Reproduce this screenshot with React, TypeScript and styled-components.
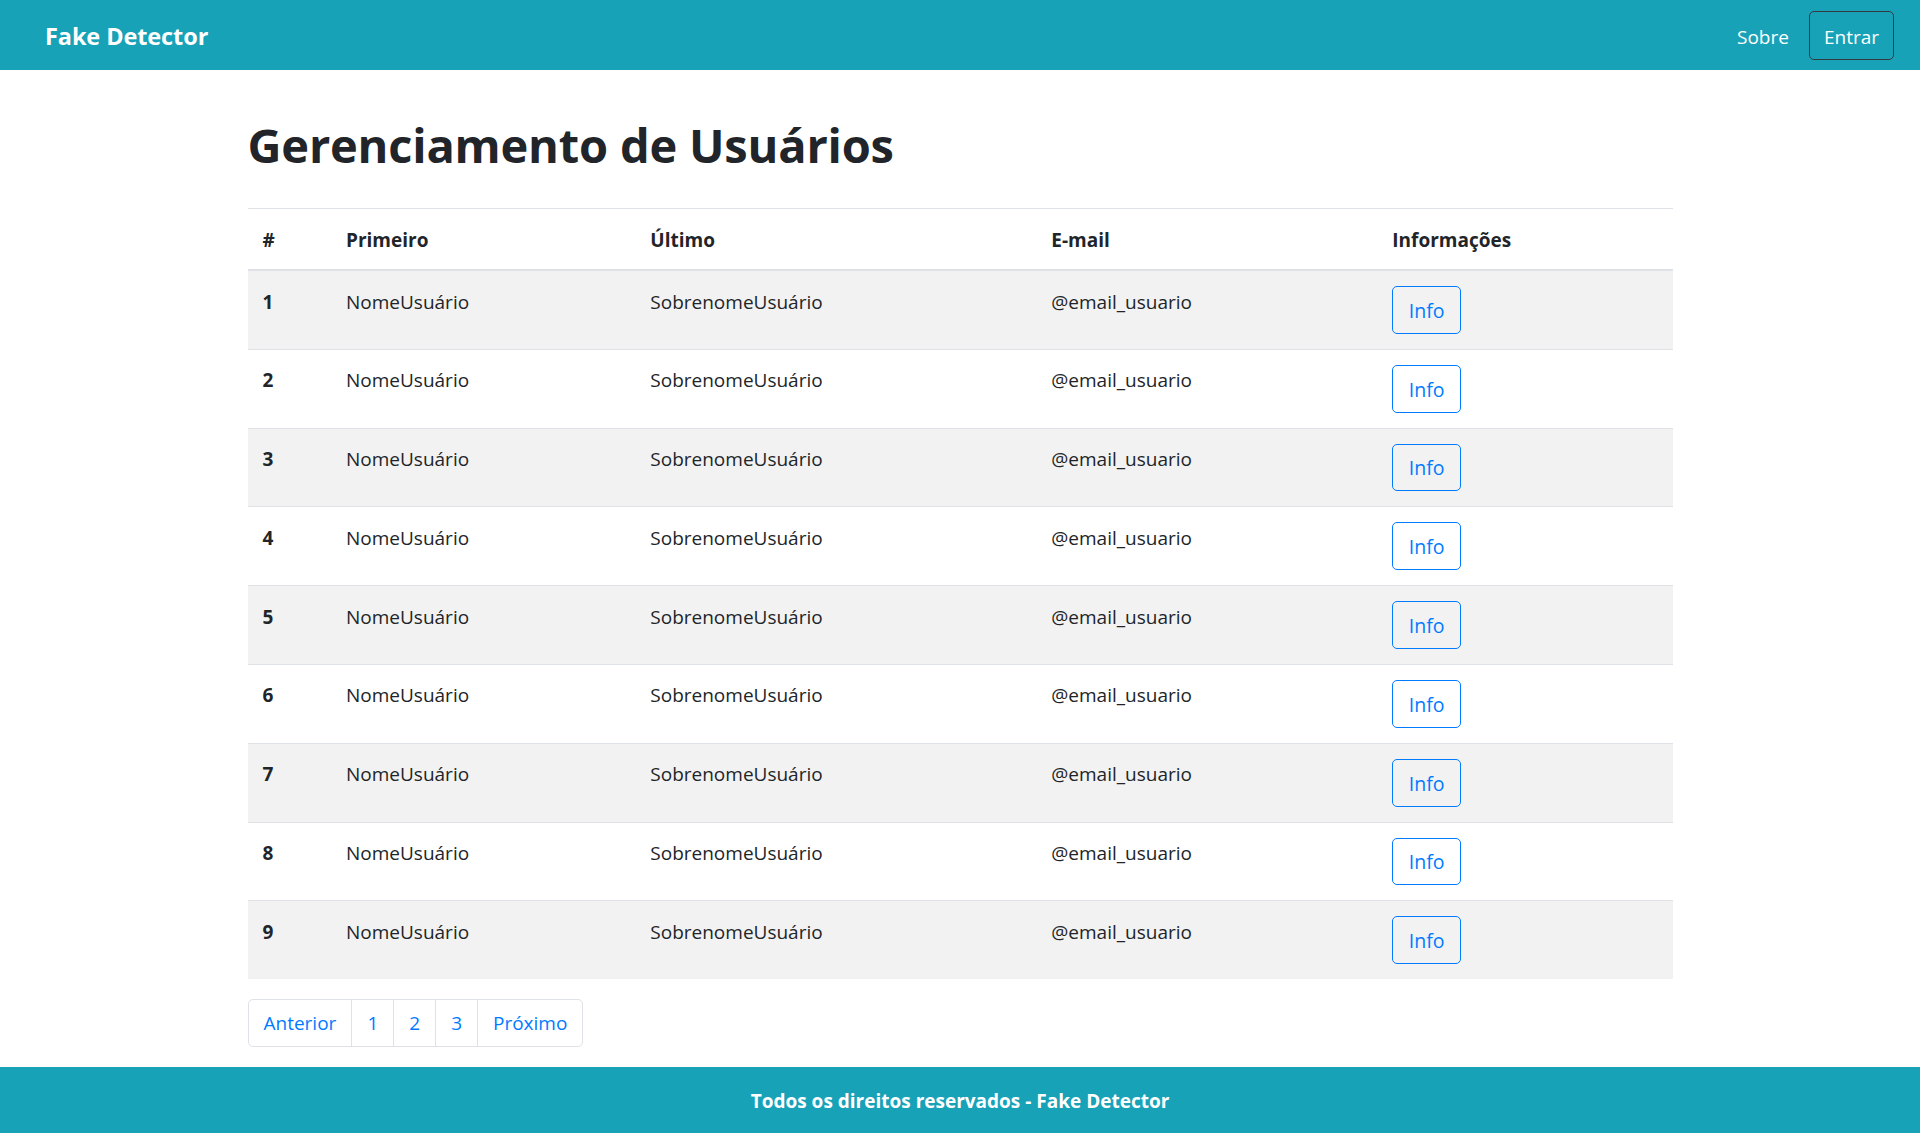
import React from "react";
import styled, { createGlobalStyle } from "styled-components";

const GlobalStyle = createGlobalStyle`
  html, body {
    margin: 0;
    padding: 0;
  }
  body {
    font-family: "Open Sans", "Noto Sans", "DejaVu Sans", sans-serif;
    font-size: 19px;
    line-height: 30px;
    color: #212529;
    background: #ffffff;
  }
  * { box-sizing: border-box; }
`;

const Page = styled.div`
  min-height: 100vh;
  display: flex;
  flex-direction: column;
`;

const Navbar = styled.nav`
  height: 70px;
  background: #17a2b8;
  display: flex;
  align-items: center;
  justify-content: space-between;
  padding: 1px 26px 0 45px;
`;

const Brand = styled.a`
  color: #ffffff;
  font-weight: 700;
  font-size: 23.5px;
  line-height: 37px;
  text-decoration: none;
  letter-spacing: -0.1px;
  padding-top: 2px;
`;

const NavRight = styled.div`
  display: flex;
  align-items: center;
`;

const NavLink = styled.a`
  color: #ffffff;
  font-size: 19px;
  line-height: 30px;
  padding: 11px 10px 9px;
  text-decoration: none;
`;

const OutlineButton = styled.button`
  margin-left: 10px;
  height: 49px;
  padding: 2px 14px 0;
  font-family: inherit;
  font-size: 19px;
  color: #ffffff;
  background: transparent;
  border: 1px solid #343a40;
  border-radius: 5px;
`;

const Container = styled.main`
  width: 1425px;
  margin: 0 auto;
`;

const Title = styled.h1`
  margin: 47px 0 35px;
  font-size: 47px;
  line-height: 56px;
  font-weight: 700;
  color: #212529;
  letter-spacing: -0.2px;
`;

const Table = styled.table`
  width: 100%;
  border-collapse: collapse;
  table-layout: fixed;
  margin-bottom: 20px;
`;

const Th = styled.th`
  text-align: left;
  font-weight: 700;
  padding: 16px 15px 14px;
  line-height: 30px;
  border-top: 1px solid #dee2e6;
  border-bottom: 2px solid #dee2e6;
  vertical-align: bottom;
`;

const Tr = styled.tr<{ $striped: boolean }>`
  background: ${(p) => (p.$striped ? "#f2f2f2" : "transparent")};
`;

const Td = styled.td<{ $bold?: boolean }>`
  padding: 15px 15px;
  line-height: 30px;
  vertical-align: top;
  border-top: 1px solid #dee2e6;
  font-weight: ${(p) => (p.$bold ? 700 : 400)};
`;

const CellText = styled.span`
  display: block;
  padding-top: 0.5px;
`;

const InfoButton = styled.button`
  height: 47.8px;
  padding: 1px 15.5px 0;
  font-family: inherit;
  font-size: 19.5px;
  color: #007bff;
  background: transparent;
  border: 1px solid #007bff;
  border-radius: 5px;
  cursor: pointer;
`;

const Pagination = styled.ul`
  display: flex;
  list-style: none;
  padding: 0;
  margin: 0 0 20px;
`;

const PageLink = styled.a<{ $first?: boolean; $last?: boolean }>`
  display: block;
  padding: 11px 15px 9px;
  line-height: 25.5px;
  font-size: 19px;
  color: #007bff;
  background: #ffffff;
  border: 1px solid #dee2e6;
  margin-left: ${(p) => (p.$first ? "0" : "-1px")};
  border-radius: ${(p) =>
    p.$first ? "5px 0 0 5px" : p.$last ? "0 5px 5px 0" : "0"};
  text-decoration: none;
`;

const Footer = styled.footer`
  margin-top: auto;
  height: 67.5px;
  padding-top: 2px;
  background: #17a2b8;
  color: #ffffff;
  display: flex;
  align-items: center;
  justify-content: center;
  font-weight: 700;
  font-size: 19px;
`;

const columns = [
  { label: "#", width: 83.5 },
  { label: "Primeiro", width: 304.3 },
  { label: "Último", width: 401 },
  { label: "E-mail", width: 341 },
  { label: "Informações", width: 295.2 },
];

const rows = [1, 2, 3, 4, 5, 6, 7, 8, 9];
const pages = ["Anterior", "1", "2", "3", "Próximo"];

export default function App() {
  return (
    <Page>
      <GlobalStyle />
      <Navbar>
        <Brand href="#">Fake Detector</Brand>
        <NavRight>
          <NavLink href="#">Sobre</NavLink>
          <OutlineButton>Entrar</OutlineButton>
        </NavRight>
      </Navbar>
      <Container>
        <Title>Gerenciamento de Usuários</Title>
        <Table>
          <colgroup>
            {columns.map((c) => (
              <col key={c.label} style={{ width: c.width }} />
            ))}
          </colgroup>
          <thead>
            <tr>
              {columns.map((c) => (
                <Th key={c.label}>{c.label}</Th>
              ))}
            </tr>
          </thead>
          <tbody>
            {rows.map((n) => (
              <Tr key={n} $striped={n % 2 === 1}>
                <Td $bold>
                  <CellText>{n}</CellText>
                </Td>
                <Td>
                  <CellText>NomeUsuário</CellText>
                </Td>
                <Td>
                  <CellText>SobrenomeUsuário</CellText>
                </Td>
                <Td>
                  <CellText>@email_usuario</CellText>
                </Td>
                <Td>
                  <InfoButton>Info</InfoButton>
                </Td>
              </Tr>
            ))}
          </tbody>
        </Table>
        <Pagination>
          {pages.map((p, i) => (
            <li key={p}>
              <PageLink href="#" $first={i === 0} $last={i === pages.length - 1}>
                {p}
              </PageLink>
            </li>
          ))}
        </Pagination>
      </Container>
      <Footer>Todos os direitos reservados - Fake Detector</Footer>
    </Page>
  );
}
